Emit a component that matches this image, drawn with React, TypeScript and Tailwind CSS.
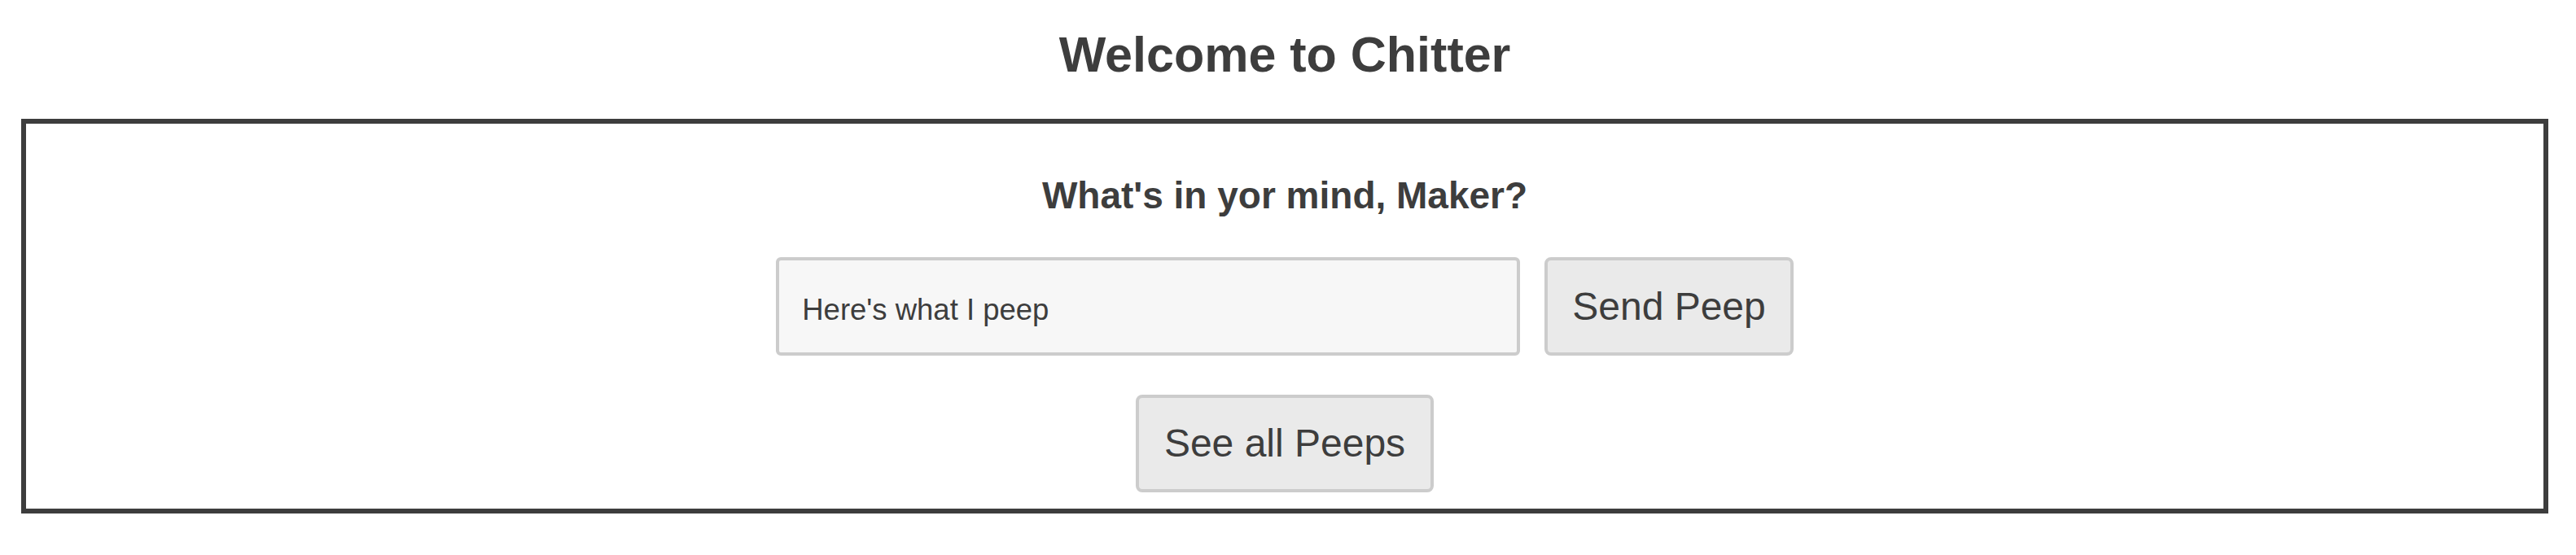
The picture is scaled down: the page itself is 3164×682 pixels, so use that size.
import React from 'react';

const App: React.FC = () => {
  return (
    <div className="min-h-[682px] bg-white text-[#3d3d3d] font-['Liberation_Sans',Arial,sans-serif]">
      <div className="ml-[26px] w-[3104px]">
        {/* Page title */}
        <h1 className="pt-[31px] text-center text-[61px] leading-[72px] font-bold">Welcome to Chitter</h1>

        {/* Peep composer */}
        <div className="mt-[43px] border-[6px] border-[#3d3d3d] flex flex-col items-center pt-[62px] pb-[20px]">
          <h2 className="text-[46px] leading-[53px] font-bold">What's in yor mind, Maker?</h2>

          <form className="mt-[49px] flex gap-[30px]" onSubmit={(e) => e.preventDefault()}>
            <input
              type="text"
              placeholder="Here's what I peep"
              className="w-[914px] h-[121px] box-border pt-[9px] pb-0 px-[28px] text-[36.5px] bg-[#f7f7f7] border-4 border-[#cccccc] rounded-[6px] text-[#3d3d3d] placeholder:text-[#3d3d3d] outline-none font-['Liberation_Sans',Arial,sans-serif]"
            />
            <button
              type="submit"
              className="px-[30px] py-[29px] text-[48px] leading-[55px] bg-[#eaeaea] border-4 border-[#cccccc] rounded-[8px] text-[#3d3d3d]"
            >
              Send Peep
            </button>
          </form>

          <button
            type="button"
            className="mt-[48px] px-[31px] py-[28px] text-[48px] leading-[56px] bg-[#eaeaea] border-4 border-[#cccccc] rounded-[8px] text-[#3d3d3d]"
          >
            See all Peeps
          </button>
        </div>
      </div>
    </div>
  );
};

export default App;
